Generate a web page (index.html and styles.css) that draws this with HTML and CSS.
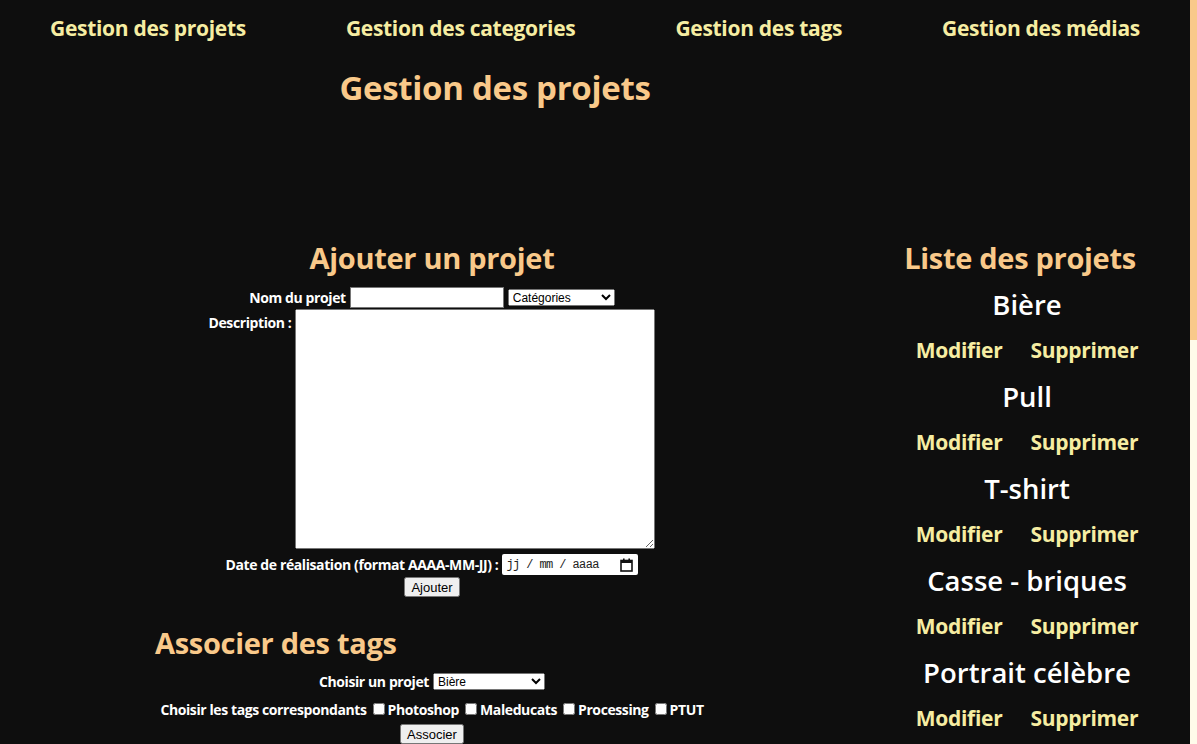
FILE: index.html
```html
<!DOCTYPE html>
<html lang="fr">
<head>
<meta charset="utf-8">
<title>Gestion des projets</title>
<link rel="stylesheet" href="styles.css">
</head>
<body>
<nav class="topnav">
  <a href="#">Gestion des projets</a>
  <a href="#">Gestion des categories</a>
  <a href="#">Gestion des tags</a>
  <a href="#">Gestion des médias</a>
</nav>
<h1 class="page-title">Gestion des projets</h1>
<main class="layout">
  <section class="left">
    <h2 class="sec-title center">Ajouter un projet</h2>
    <form class="form">
      <div class="row">
        <label class="lbl">Nom du projet</label>
        <input type="text" class="txt">
        <select class="sel-cat"><option>Catégories</option></select>
      </div>
      <div class="row top">
        <label class="lbl desc">Description :</label>
        <textarea class="area"></textarea>
      </div>
      <div class="row date-row">
        <label class="lbl">Date de réalisation (format AAAA-MM-JJ) :</label>
        <div class="date" role="textbox">
          <span class="date-ph">jj / mm / aaaa</span>
          <svg class="cal" width="13" height="14" viewBox="0 0 13 14" aria-hidden="true">
            <rect x="1" y="2.5" width="11" height="10.5" fill="none" stroke="#111" stroke-width="1.6"/>
            <rect x="1" y="2" width="11" height="3" fill="#111"/>
            <rect x="3" y="0.5" width="1.6" height="3" fill="#111"/>
            <rect x="8.4" y="0.5" width="1.6" height="3" fill="#111"/>
          </svg>
        </div>
      </div>
      <div class="row btn-row">
        <button type="button" class="btn">Ajouter</button>
      </div>
    </form>
    <h2 class="sec-title tags-title">Associer des tags</h2>
    <form class="form">
      <div class="row choose-row">
        <label class="lbl">Choisir un projet</label>
        <select class="sel-proj"><option>Bière</option></select>
      </div>
      <div class="row tag-row">
        <span class="lbl">Choisir les tags correspondants</span>
        <label class="lbl chk"><input type="checkbox">Photoshop</label>
        <label class="lbl chk"><input type="checkbox">Maleducats</label>
        <label class="lbl chk"><input type="checkbox">Processing</label>
        <label class="lbl chk"><input type="checkbox">PTUT</label>
      </div>
      <div class="row assoc-row">
        <button type="button" class="btn">Associer</button>
      </div>
    </form>
  </section>
  <aside class="right">
    <h2 class="sec-title list-title">Liste des projets</h2>
    <div class="item"><h3 class="item-name">Bière</h3><div class="actions"><a href="#">Modifier</a><a href="#">Supprimer</a></div></div>
    <div class="item"><h3 class="item-name">Pull</h3><div class="actions"><a href="#">Modifier</a><a href="#">Supprimer</a></div></div>
    <div class="item"><h3 class="item-name">T-shirt</h3><div class="actions"><a href="#">Modifier</a><a href="#">Supprimer</a></div></div>
    <div class="item"><h3 class="item-name">Casse - briques</h3><div class="actions"><a href="#">Modifier</a><a href="#">Supprimer</a></div></div>
    <div class="item"><h3 class="item-name">Portrait célèbre</h3><div class="actions"><a href="#">Modifier</a><a href="#">Supprimer</a></div></div>
  </aside>
</main>
<div class="scrollbar" aria-hidden="true"><div class="thumb"></div></div>
</body>
</html>
```
FILE: styles.css
```css
html { background: #0e0e0e; }

body {
  margin: 0;
  padding-right: 7px;
  background: #0e0e0e;
  color: #fff;
  font-family: "Open Sans", "Noto Sans", sans-serif;
}

.scrollbar {
  position: fixed;
  top: 0;
  right: 0;
  width: 7px;
  height: 100vh;
  background: #fffbea;
}
.thumb {
  height: 340px;
  background: #f9c98a;
}

.topnav {
  display: flex;
  justify-content: space-around;
  padding: 16px 0;
}
.topnav a {
  color: #f6eda2;
  text-decoration: none;
  font-weight: 700;
  font-size: 21px;
  line-height: 24px;
  letter-spacing: -0.3px;
}

.page-title {
  margin: 12px 200px 0 0;
  text-align: center;
  color: #f9c98a;
  font-size: 33px;
  line-height: 40px;
  font-weight: 700;
  letter-spacing: -0.3px;
}

.layout {
  display: flex;
  margin-top: 132px;
}
.left { flex: 0 0 864px; }
.right { flex: 1; text-align: center; }

.sec-title {
  margin: 0;
  color: #f9c98a;
  font-size: 29px;
  line-height: 36px;
  font-weight: 700;
  letter-spacing: -0.3px;
}
.center { text-align: center; }
.tags-title { margin-top: 28px; padding-left: 155px; }
.list-title { padding-right: 14px; }

.form { display: flex; flex-direction: column; }
.row {
  display: flex;
  justify-content: center;
  align-items: center;
  gap: 4px;
}
.row.top { align-items: flex-start; margin-top: 1px; }
.form .row:first-child { margin-top: 11px; }
.lbl {
  color: #fff;
  font-weight: 700;
  font-size: 14px;
  letter-spacing: -0.4px;
}
.desc { padding-top: 4px; }

.txt {
  width: 154px;
  height: 21px;
  box-sizing: border-box;
  border: 1px solid #767676;
  padding: 1px 2px;
}
.sel-cat { width: 107px; height: 17px; font-size: 12px; padding: 0; }
.area {
  width: 360px;
  height: 240px;
  box-sizing: border-box;
  margin: 0;
}
.date-row { margin-top: 5px; }
.date {
  width: 136px;
  height: 21px;
  box-sizing: border-box;
  background: #fff;
  border-radius: 2px;
  display: flex;
  align-items: center;
  justify-content: space-between;
  padding: 0 5px 0 4px;
}
.date-ph {
  font-family: "Liberation Mono", "DejaVu Sans Mono", monospace;
  font-size: 12px;
  color: #222;
  letter-spacing: -0.6px;
  white-space: pre;
}
.cal { display: block; }
.btn-row { margin-top: 2px; }
.btn {
  font-family: Arial, "Liberation Sans", sans-serif;
  font-size: 13px;
  height: 20px;
  padding: 0 5px;
}

.choose-row { margin-top: 10px; }
.sel-proj { width: 112px; height: 17px; font-size: 12px; padding: 0; }
.tag-row { margin-top: 8px; height: 20px; }
.chk { display: inline-flex; align-items: center; }
.chk input { margin: 0 3px 0 2px; width: 12px; height: 12px; }
.assoc-row { margin-top: 5px; }

.item { margin-top: 11px; }
.item + .item { margin-top: 15px; }
.item-name {
  margin: 0;
  font-size: 27.5px;
  line-height: 36px;
  font-weight: 600;
  color: #fff;
}
.actions {
  display: flex;
  justify-content: center;
  gap: 28px;
  margin-top: 13px;
}
.actions a {
  color: #f6eda2;
  text-decoration: none;
  font-weight: 700;
  font-size: 21px;
  line-height: 28px;
  letter-spacing: -0.3px;
}
```
